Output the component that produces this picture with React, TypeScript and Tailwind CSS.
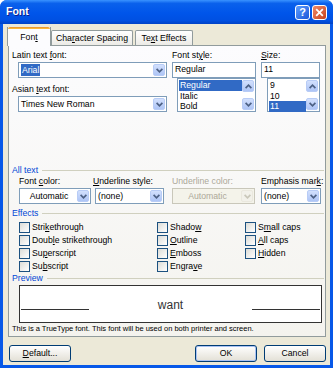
import React from 'react';

function Chevron({ up = false, color = '#4D6185' }: { up?: boolean; color?: string }) {
  return (
    <svg width="7" height="5" viewBox="0 0 7 5">
      <path d={up ? 'M0.6 4.2L3.5 1.2L6.4 4.2' : 'M0.6 0.8L3.5 3.8L6.4 0.8'} fill="none" stroke={color} strokeWidth="1.7" />
    </svg>
  );
}

function DropBtn({ disabled = false }: { disabled?: boolean }) {
  return (
    <div
      className={`flex h-full w-[12px] items-center justify-center rounded-[2px] border ${
        disabled ? 'border-[#EAE8DE] bg-[#F2F1EA]' : 'border-[#B8CCF6] bg-linear-to-b from-[#D2E0FD] to-[#AEC5F6]'
      }`}
    >
      <Chevron color={disabled ? '#C9C7BA' : '#4D6185'} />
    </div>
  );
}

function Combo({
  className = '',
  children,
  disabled = false,
  center = false
}: {
  className?: string;
  children: React.ReactNode;
  disabled?: boolean;
  center?: boolean;
}) {
  return (
    <div
      className={`flex h-[16px] border p-[1px] ${
        disabled ? 'border-[#C9C7BA] bg-[#F4F3EA] text-[#ACA899]' : 'border-[#7F9DB9] bg-white'
      } ${className}`}
    >
      <div className={`flex flex-1 items-center whitespace-nowrap leading-[12px] ${center ? 'justify-center' : 'pl-[1px]'}`}>
        {children}
      </div>
      <DropBtn disabled={disabled} />
    </div>
  );
}

function ListBox({ items, selected, className = '' }: { items: string[]; selected: string; className?: string }) {
  return (
    <div className={`flex h-[34px] border border-[#7F9DB9] bg-white ${className}`}>
      <div className="flex flex-1 flex-col pl-[1px] pt-[1px]">
        {items.map(item => (
          <div
            key={item}
            className={`h-[10.5px] pl-[1px] leading-[10.5px] ${item === selected ? 'bg-[#316AC5] text-white' : ''}`}
          >
            {item}
          </div>
        ))}
      </div>
      <div className="flex w-[13px] flex-col justify-between py-[1px] pr-[1px]">
        <div className="flex h-[12px] items-center justify-center rounded-[2px] border border-[#B8CCF6] bg-linear-to-b from-[#D2E0FD] to-[#AEC5F6]">
          <Chevron up />
        </div>
        <div className="flex h-[12px] items-center justify-center rounded-[2px] border border-[#B8CCF6] bg-linear-to-b from-[#D2E0FD] to-[#AEC5F6]">
          <Chevron />
        </div>
      </div>
    </div>
  );
}

function GroupHeader({ title, className = '' }: { title: string; className?: string }) {
  return (
    <div className={`flex h-[11px] items-center leading-[11px] ${className}`}>
      <span className="text-[#0046D5]">{title}</span>
      <div className="ml-[4px] h-px flex-1 bg-[#D0D0BF]" />
    </div>
  );
}

function Check({ children }: { children: React.ReactNode }) {
  return (
    <div className="flex h-[13px] items-center">
      <div className="h-[11px] w-[11px] border border-[#1C5180] bg-linear-to-br from-[#DCDCD7] to-white" />
      <span className="ml-[2px] whitespace-nowrap leading-[11px]">{children}</span>
    </div>
  );
}

function Button({ children, primary = false, className = '' }: { children: React.ReactNode; primary?: boolean; className?: string }) {
  return (
    <div
      className={`flex h-[17px] w-[62px] items-center justify-center rounded-[3px] border border-[#003C74] bg-linear-to-b from-white to-[#E3E0D6] ${
        primary ? 'shadow-[inset_0_0_0_1px_#A9C2F3]' : ''
      } ${className}`}
    >
      {children}
    </div>
  );
}

export default function App() {
  return (
    <div className="h-[368px] w-[333px] bg-white font-['Liberation_Sans',Arial,sans-serif] text-[8.7px] text-black">
      <div className="flex h-full flex-col rounded-t-[7px] bg-[#0758E8]">
        <div className="flex h-[24px] items-center rounded-t-[7px] bg-[linear-gradient(to_bottom,#3A93FF_0%,#0A61EC_14%,#0055EA_55%,#0050E2_85%,#0042C6_100%)] pl-[6px] pr-[6px]">
          <span className="flex-1 text-[10.5px] font-bold text-white [text-shadow:1px_1px_#0A1E8C]">Font</span>
          <div className="flex h-[15px] w-[15px] items-center justify-center rounded-[3px] border border-white bg-linear-to-br from-[#5E9DFF] to-[#1D56D8] text-[11px] font-bold leading-none text-white">
            ?
          </div>
          <div className="ml-[2px] flex h-[15px] w-[15px] items-center justify-center rounded-[3px] border border-white bg-linear-to-br from-[#EE8A67] to-[#C63E17]">
            <svg width="9" height="9" viewBox="0 0 9 9">
              <path d="M1.2 1.2L7.8 7.8M7.8 1.2L1.2 7.8" stroke="white" strokeWidth="1.8" />
            </svg>
          </div>
        </div>

        <div className="mx-[3px] mb-[3px] flex flex-1 flex-col bg-[#ECE9D8] pl-[5px] pr-[4px] pt-[3px]">
          <div className="-ml-[1px] flex h-[18px] items-end whitespace-nowrap">
            <div className="relative z-10 -mb-[1px] flex h-[19px] w-[44px] flex-col border-x border-[#919B9C] bg-[#FCFCFE]">
              <div className="h-[2px] rounded-t-[2px] bg-linear-to-b from-[#E68B2C] to-[#FFC83C]" />
              <div className="flex flex-1 items-center justify-center pt-[1px]">
                Fon<span className="underline">t</span>
              </div>
            </div>
            <div className="flex h-[15px] w-[82px] items-center justify-center rounded-t-[2px] border-x border-t border-[#919B9C] bg-linear-to-b from-white to-[#ECEBE6] pt-[1px]">
              Cha<span className="underline">r</span>acter Spacing
            </div>
            <div className="ml-[2px] flex h-[15px] w-[58px] items-center justify-center rounded-t-[2px] border-x border-t border-[#919B9C] bg-linear-to-b from-white to-[#ECEBE6] pt-[1px]">
              Te<span className="underline">x</span>t Effects
            </div>
          </div>

          <div className="flex h-[292px] flex-col whitespace-nowrap border border-[#919B9C] bg-linear-to-b from-[#FCFCFE] to-[#F4F3EE] pl-[3px] pr-[1px]">
            <div className="flex pt-[4px]">
              <div className="flex w-[155px] flex-col">
                <div className="leading-[11px]">
                  Latin text <span className="underline">f</span>ont:
                </div>
                <Combo className="ml-[6px] mt-[1px] w-[149px]">
                  <span className="bg-[#316AC5] px-[1px] text-white">Arial</span>
                </Combo>
                <div className="mt-[6px] leading-[11px]">
                  Asian <span className="underline">t</span>ext font:
                </div>
                <Combo className="ml-[6px] mt-[1px] w-[149px]">Times New Roman</Combo>
              </div>
              <div className="ml-[5px] flex w-[84px] flex-col">
                <div className="leading-[11px]">
                  Font st<span className="underline">y</span>le:
                </div>
                <div className="mt-[1px] flex h-[16px] items-center border border-[#7F9DB9] bg-white pl-[2px]">Regular</div>
                <ListBox className="ml-[5px]" items={['Regular', 'Italic', 'Bold']} selected="Regular" />
              </div>
              <div className="ml-[5px] flex w-[59px] flex-col">
                <div className="leading-[11px]">
                  <span className="underline">S</span>ize:
                </div>
                <div className="mt-[1px] flex h-[16px] items-center border border-[#7F9DB9] bg-white pl-[2px]">11</div>
                <ListBox className="ml-[6px]" items={['9', '10', '11']} selected="11" />
              </div>
            </div>

            <GroupHeader title="All text" className="mt-[53px]" />
            <div className="flex">
              <div className="ml-[7px] flex w-[72px] flex-col">
                <div className="leading-[11px]">
                  Font <span className="underline">c</span>olor:
                </div>
                <Combo className="mt-[1px] w-[72px]" center>
                  Automatic
                </Combo>
              </div>
              <div className="ml-[2px] flex w-[72px] flex-col">
                <div className="leading-[11px]">
                  <span className="underline">U</span>nderline style:
                </div>
                <Combo className="ml-[2px] mt-[1px] w-[69px]">(none)</Combo>
              </div>
              <div className="ml-[7px] flex w-[83px] flex-col">
                <div className="leading-[11px] text-[#ACA899]">Underline color:</div>
                <Combo className="mt-[1px] w-[83px]" disabled center>
                  Automatic
                </Combo>
              </div>
              <div className="ml-[6px] flex w-[60px] flex-col">
                <div className="leading-[11px]">
                  Emphasis mar<span className="underline">k</span>:
                </div>
                <Combo className="mt-[1px] w-[60px]">(none)</Combo>
              </div>
            </div>

            <GroupHeader title="Effects" className="mt-[4px]" />
            <div className="ml-[7px] mt-[2px] grid grid-cols-[138px_88px_1fr]">
              <Check>
                Stri<span className="underline">k</span>ethrough
              </Check>
              <Check>
                Shado<span className="underline">w</span>
              </Check>
              <Check>
                S<span className="underline">m</span>all caps
              </Check>
              <Check>
                Doub<span className="underline">l</span>e strikethrough
              </Check>
              <Check>
                <span className="underline">O</span>utline
              </Check>
              <Check>
                <span className="underline">A</span>ll caps
              </Check>
              <Check>
                Su<span className="underline">p</span>erscript
              </Check>
              <Check>
                <span className="underline">E</span>mboss
              </Check>
              <Check>
                <span className="underline">H</span>idden
              </Check>
              <Check>
                Su<span className="underline">b</span>script
              </Check>
              <Check>
                Engra<span className="underline">v</span>e
              </Check>
              <div />
            </div>

            <GroupHeader title="Preview" />
            <div className="ml-[7px] mt-[1px] flex h-[38px] w-[303px] items-center justify-between border border-[#333333] bg-white px-[1px]">
              <div className="mt-[10px] h-px w-[68px] bg-[#333333]" />
              <span className="mt-[2px] text-[12px] leading-[14px] text-[#333333]">want</span>
              <div className="mt-[10px] h-px w-[68px] bg-[#333333]" />
            </div>
            <div className="mt-[1px] text-[7.5px] leading-[10px]">
              This is a TrueType font. This font will be used on both printer and screen.
            </div>
          </div>

          <div className="mt-[8px] flex">
            <Button className="ml-[1px]">
              <span>
                <span className="underline">D</span>efault...
              </span>
            </Button>
            <div className="flex-1" />
            <Button primary>OK</Button>
            <Button className="ml-[7px]">Cancel</Button>
          </div>
        </div>
      </div>
    </div>
  );
}
